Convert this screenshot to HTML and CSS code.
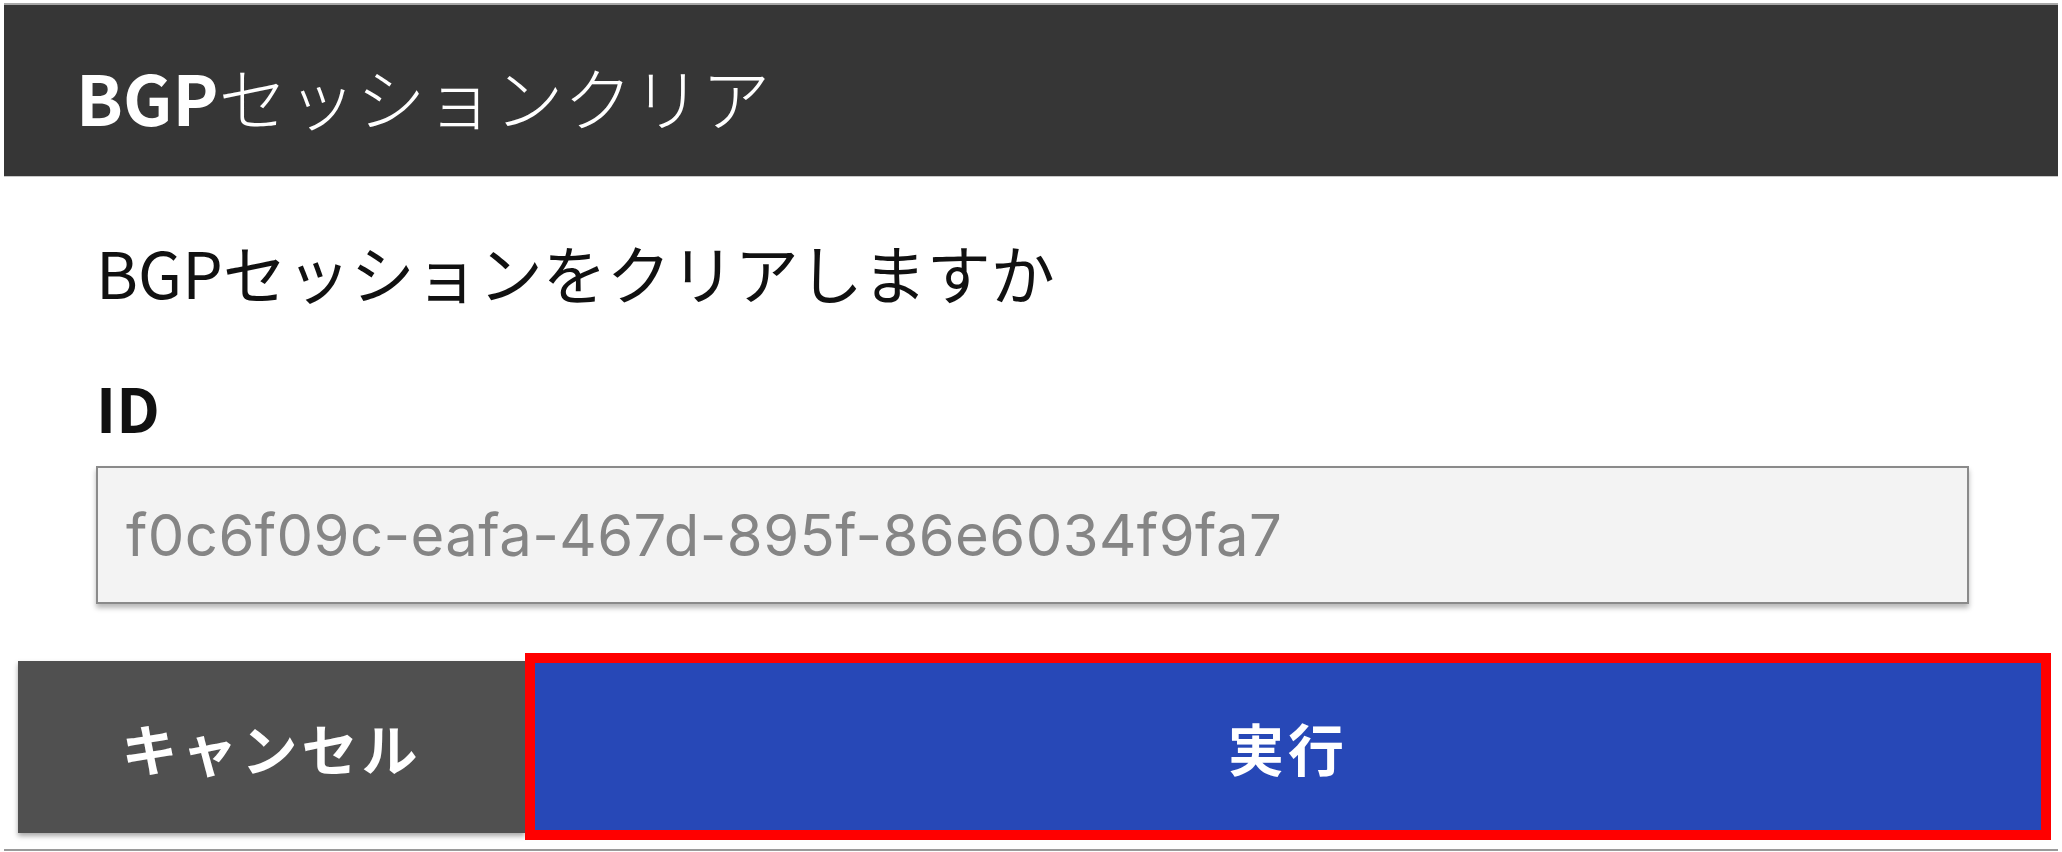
FILE: index.html
```html
<!DOCTYPE html>
<html lang="ja">
<head>
<meta charset="utf-8">
<title>BGPセッションクリア</title>
<link rel="stylesheet" href="styles.css">
</head>
<body>
<div class="dialog">
  <div class="dialog-header">
    <h1 class="dialog-title"><span class="latin">BGP</span>セッションクリア</h1>
  </div>
  <div class="dialog-body">
    <p class="message">BGPセッションをクリアしますか</p>
    <label class="field-label" for="session-id">ID</label>
    <input class="field-input" id="session-id" type="text" readonly value="f0c6f09c-eafa-467d-895f-86e6034f9fa7">
  </div>
  <div class="dialog-actions">
    <button class="btn btn-cancel" type="button">キャンセル</button>
    <button class="btn btn-exec" type="button">実行</button>
  </div>
</div>
</body>
</html>
```

FILE: styles.css
```css
html, body {
  margin: 0;
  padding: 0;
  background: #ffffff;
}

body {
  font-family: "Noto Sans CJK JP", "Noto Sans", sans-serif;
  color: #111111;
}

.dialog {
  margin: 3px 4px 0;
  border-top: 2px solid #a8a8a8;
  border-bottom: 2px solid #9a9a9a;
  display: flex;
  flex-direction: column;
}

.dialog-header {
  height: 172px;
  box-sizing: border-box;
  background: #363636;
  border-bottom: 1px solid #c8c8c8;
  padding: 56px 0 0 72px;
}

.dialog-title {
  margin: 0;
  font-size: 69px;
  line-height: 70px;
  font-weight: 300;
  color: #ffffff;
  letter-spacing: 0;
}

.dialog-title .latin {
  font-weight: 700;
}

.dialog-body {
  display: flex;
  flex-direction: column;
  align-items: flex-start;
  padding: 0 89px 0 92px;
}

.message {
  margin: 62px 0 0;
  font-size: 64px;
  line-height: 64px;
  font-weight: 400;
}

.field-label {
  margin-top: 72px;
  font-size: 61px;
  line-height: 64px;
  font-weight: 700;
}

.field-input {
  margin-top: 27px;
  width: 100%;
  height: 138px;
  box-sizing: border-box;
  border: 2px solid #8a8a8a;
  border-radius: 0;
  background: #f3f3f3;
  box-shadow: 0 4px 5px rgba(0, 0, 0, 0.28);
  padding: 0 0 0 28px;
  font-family: "Inter", "Liberation Sans", sans-serif;
  font-size: 58px;
  letter-spacing: 0.4px;
  color: #858585;
  outline: none;
}

.dialog-actions {
  display: flex;
  align-items: center;
  margin: 49px 7px 9px 14px;
}

.btn {
  font-family: "Noto Sans CJK JP", sans-serif;
  font-size: 56px;
  font-weight: 700;
  letter-spacing: 4px;
  color: #ffffff;
  cursor: pointer;
  padding: 0;
}

.btn-cancel {
  width: 507px;
  height: 172px;
  background: #505050;
  border: none;
  box-shadow: 0 3px 5px rgba(0, 0, 0, 0.35);
}

.btn-exec {
  flex: 1;
  height: 187px;
  box-sizing: border-box;
  background: #2748b7;
  border: 10px solid #ff0000;
}
```
